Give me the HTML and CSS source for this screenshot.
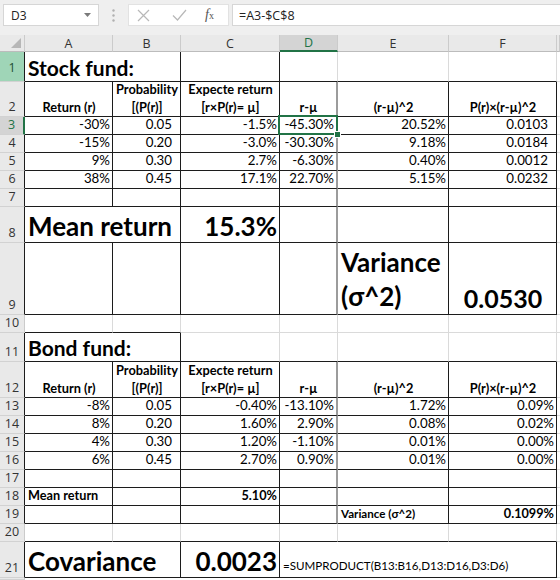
FILE: index.html
```html
<!DOCTYPE html>
<html lang="en">
<head>
  <meta charset="UTF-8">
  <meta name="viewport" content="width=device-width, initial-scale=1.0">
  <title>Stock and bond fund covariance</title>
  <link rel="stylesheet" href="styles.css">
</head>
<body>

  <!-- Barra de fórmulas -->
  <div class="topbar">
    <div class="namebox">
      <span>D3</span>
      <svg class="drop" width="7" height="4" viewBox="0 0 7 4"><path d="M0 0h7L3.5 4z" fill="#7a7a7a"/></svg>
    </div>
    <svg class="dots" width="3" height="13" viewBox="0 0 3 13">
      <circle cx="1.5" cy="1.5" r="1.2" fill="#b0b0b0"/>
      <circle cx="1.5" cy="6.5" r="1.2" fill="#b0b0b0"/>
      <circle cx="1.5" cy="11.5" r="1.2" fill="#b0b0b0"/>
    </svg>
    <div class="fnbox">
      <svg width="13" height="13" viewBox="0 0 13 13"><path d="M1 1l11 11M12 1L1 12" stroke="#b8b8b8" stroke-width="1.2" fill="none"/></svg>
      <svg width="15" height="12" viewBox="0 0 15 12"><path d="M1 6.5l4.5 4.5L14 1" stroke="#b8b8b8" stroke-width="1.2" fill="none"/></svg>
      <span class="fx"><i>f</i><small>x</small></span>
    </div>
    <div class="formula">=A3-$C$8</div>
  </div>

  <!-- Planilha -->
  <div class="sheet">
    <div class="ch corner"></div>
    <div class="ch">A</div>
    <div class="ch">B</div>
    <div class="ch">C</div>
    <div class="ch on">D</div>
    <div class="ch">E</div>
    <div class="ch">F</div>
    <div class="ch"></div>

    <!-- 1 -->
    <div class="rh green rk">1</div>
    <div class="c k span2 title">Stock fund:</div>
    <div class="c k"></div>
    <div class="c kb"></div>
    <div class="c kb"></div>
    <div class="c kb"></div>
    <div class="c"></div>

    <!-- 2 -->
    <div class="rh rk">2</div>
    <div class="c k hd">Return (r)</div>
    <div class="c k hd">Probability<br>[(P(r)]</div>
    <div class="c k hd">Expecte return<br>[r×P(r)= µ]</div>
    <div class="c d hd">r-µ</div>
    <div class="c k hd">(r-µ)^2</div>
    <div class="c k hd">P(r)×(r-µ)^2</div>
    <div class="c"></div>

    <!-- 3 -->
    <div class="rh on rk">3</div>
    <div class="c k n">-30%</div>
    <div class="c k n pb">0.05</div>
    <div class="c k n">-1.5%</div>
    <div class="c d n sel">-45.30%</div>
    <div class="c k n">20.52%</div>
    <div class="c k n pb">0.0103</div>
    <div class="c"></div>

    <!-- 4 -->
    <div class="rh rk">4</div>
    <div class="c k n">-15%</div>
    <div class="c k n pb">0.20</div>
    <div class="c k n">-3.0%</div>
    <div class="c d n">-30.30%</div>
    <div class="c k n">9.18%</div>
    <div class="c k n pb">0.0184</div>
    <div class="c"></div>

    <!-- 5 -->
    <div class="rh rk">5</div>
    <div class="c k n">9%</div>
    <div class="c k n pb">0.30</div>
    <div class="c k n">2.7%</div>
    <div class="c d n">-6.30%</div>
    <div class="c k n">0.40%</div>
    <div class="c k n pb">0.0012</div>
    <div class="c"></div>

    <!-- 6 -->
    <div class="rh rk">6</div>
    <div class="c k n">38%</div>
    <div class="c k n pb">0.45</div>
    <div class="c k n">17.1%</div>
    <div class="c d n">22.70%</div>
    <div class="c k n">5.15%</div>
    <div class="c k n pb">0.0232</div>
    <div class="c"></div>

    <!-- 7 -->
    <div class="rh rk">7</div>
    <div class="c k"></div>
    <div class="c k"></div>
    <div class="c k"></div>
    <div class="c d"></div>
    <div class="c k"></div>
    <div class="c k"></div>
    <div class="c"></div>

    <!-- 8 -->
    <div class="rh rk">8</div>
    <div class="c k span2 big">Mean return</div>
    <div class="c k n big">15.3%</div>
    <div class="c d"></div>
    <div class="c k"></div>
    <div class="c k"></div>
    <div class="c"></div>

    <!-- 9 -->
    <div class="rh rk">9</div>
    <div class="c k"></div>
    <div class="c k"></div>
    <div class="c k"></div>
    <div class="c d"></div>
    <div class="c k big wrap">Variance<br>(σ^2)</div>
    <div class="c k big mid">0.0530</div>
    <div class="c"></div>

    <!-- 10 -->
    <div class="rh">10</div>
    <div class="c kb"></div>
    <div class="c kb"></div>
    <div class="c"></div>
    <div class="c"></div>
    <div class="c"></div>
    <div class="c"></div>
    <div class="c"></div>

    <!-- 11 -->
    <div class="rh rk">11</div>
    <div class="c k span2 title">Bond fund:</div>
    <div class="c kb"></div>
    <div class="c kb"></div>
    <div class="c kb"></div>
    <div class="c kb"></div>
    <div class="c"></div>

    <!-- 12 -->
    <div class="rh rk">12</div>
    <div class="c k hd">Return (r)</div>
    <div class="c k hd">Probability<br>[(P(r)]</div>
    <div class="c k hd">Expecte return<br>[r×P(r)= µ]</div>
    <div class="c d hd">r-µ</div>
    <div class="c k hd">(r-µ)^2</div>
    <div class="c k hd">P(r)×(r-µ)^2</div>
    <div class="c"></div>

    <!-- 13 -->
    <div class="rh rk">13</div>
    <div class="c k n">-8%</div>
    <div class="c k n pb">0.05</div>
    <div class="c k n">-0.40%</div>
    <div class="c d n">-13.10%</div>
    <div class="c k n">1.72%</div>
    <div class="c k n">0.09%</div>
    <div class="c"></div>

    <!-- 14 -->
    <div class="rh rk">14</div>
    <div class="c k n">8%</div>
    <div class="c k n pb">0.20</div>
    <div class="c k n">1.60%</div>
    <div class="c d n">2.90%</div>
    <div class="c k n">0.08%</div>
    <div class="c k n">0.02%</div>
    <div class="c"></div>

    <!-- 15 -->
    <div class="rh rk">15</div>
    <div class="c k n">4%</div>
    <div class="c k n pb">0.30</div>
    <div class="c k n">1.20%</div>
    <div class="c d n">-1.10%</div>
    <div class="c k n">0.01%</div>
    <div class="c k n">0.00%</div>
    <div class="c"></div>

    <!-- 16 -->
    <div class="rh rk">16</div>
    <div class="c k n">6%</div>
    <div class="c k n pb">0.45</div>
    <div class="c k n">2.70%</div>
    <div class="c d n">0.90%</div>
    <div class="c k n">0.01%</div>
    <div class="c k n">0.00%</div>
    <div class="c"></div>

    <!-- 17 -->
    <div class="rh rk">17</div>
    <div class="c k"></div>
    <div class="c k"></div>
    <div class="c k"></div>
    <div class="c d"></div>
    <div class="c k"></div>
    <div class="c k"></div>
    <div class="c"></div>

    <!-- 18 -->
    <div class="rh rk">18</div>
    <div class="c k bold">Mean return</div>
    <div class="c k"></div>
    <div class="c k n bold">5.10%</div>
    <div class="c d"></div>
    <div class="c k"></div>
    <div class="c k"></div>
    <div class="c"></div>

    <!-- 19 -->
    <div class="rh rk">19</div>
    <div class="c k"></div>
    <div class="c k"></div>
    <div class="c k"></div>
    <div class="c d"></div>
    <div class="c k bold small">Variance (σ^2)</div>
    <div class="c k n bold">0.1099%</div>
    <div class="c"></div>

    <!-- 20 -->
    <div class="rh">20</div>
    <div class="c kb"></div>
    <div class="c kb"></div>
    <div class="c kb"></div>
    <div class="c kb"></div>
    <div class="c kb"></div>
    <div class="c kb"></div>
    <div class="c"></div>

    <!-- 21 -->
    <div class="rh rk">21</div>
    <div class="c k span2 big">Covariance</div>
    <div class="c k n big">0.0023</div>
    <div class="c k span3 note">=SUMPRODUCT(B13:B16,D13:D16,D3:D6)</div>
    <div class="c"></div>

    <div class="rh"></div>
  </div>

</body>
</html>
```

FILE: styles.css
```css
/* Página */
body {
  margin: 0;
  width: 560px;
  height: 580px;
  overflow: hidden;
  background: #ffffff;
  font-family: Lato, "Noto Sans", sans-serif;
  color: #000000;
}

/* Barra de fórmulas */
.topbar {
  height: 35px;
  box-sizing: border-box;
  padding: 4px 0 0 3px;
  background: #efefef;
  display: flex;
  align-items: flex-start;
  font-family: "Open Sans", "Noto Sans", sans-serif;
  font-size: 12px;
  color: #222;
}

.namebox {
  width: 96px;
  height: 22px;
  box-sizing: border-box;
  background: #ffffff;
  border: 1px solid #d6d6d6;
  display: flex;
  align-items: center;
  justify-content: space-between;
  padding: 0 7px 0 7px;
}

.dots {
  margin: 5px 13px 0 13px;
}

.fnbox {
  width: 101px;
  height: 22px;
  box-sizing: border-box;
  background: #ffffff;
  border: 1px solid #e2e2e2;
  display: flex;
  align-items: center;
  gap: 22px;
  padding-left: 8px;
}

.fx {
  font-family: "Liberation Serif", serif;
  font-size: 14px;
  color: #555;
  margin-left: -4px;
}

.fx small {
  font-size: 10px;
}

.formula {
  flex: 1;
  height: 22px;
  box-sizing: border-box;
  margin-left: 3px;
  background: #ffffff;
  border: 1px solid #d6d6d6;
  border-right: none;
  padding: 2px 6px;
  font-size: 12.5px;
}

/* Grade da planilha */
.sheet {
  display: grid;
  grid-template-columns: 25px 88px 68px 99px 58px 111px 108px 3px;
  grid-template-rows: 17px 30px 35px repeat(5, 18px) 36px 72px 18px 29px 36px repeat(8, 18px) 36px 2px;
}

.c {
  box-sizing: border-box;
  border-right: 1px solid #dadada;
  border-bottom: 1px solid #dadada;
  display: flex;
  align-items: flex-end;
  padding: 0 2px 1px 3px;
  white-space: nowrap;
  font-size: 13.3px;
  line-height: 17px;
}

.k {
  border-right-color: #1c1c1c;
  border-bottom-color: #1c1c1c;
}

.kb {
  border-bottom-color: #1c1c1c;
}

.d {
  border-right: 2px solid #9c9c9c;
  border-bottom-color: #1c1c1c;
}

.span2 {
  grid-column: span 2;
}

.span3 {
  grid-column: span 3;
}

.n {
  justify-content: flex-end;
}

.pb {
  padding-right: 8px;
}

.hd {
  justify-content: center;
  text-align: center;
  font-weight: bold;
  font-size: 12.8px;
  line-height: 18px;
  padding-bottom: 0;
}

.bold {
  font-weight: bold;
  font-size: 12.7px;
}

.bold.small {
  font-size: 11.6px;
}

.title {
  font-weight: bold;
  font-size: 21px;
  line-height: 25px;
}

.big {
  font-weight: bold;
  font-size: 26px;
  line-height: 30px;
}

.big.mid {
  font-size: 25px;
  justify-content: center;
}

.wrap {
  line-height: 34px;
  white-space: normal;
}

.note {
  font-size: 11.6px;
  padding-bottom: 3px;
}

/* Célula ativa */
.sel {
  position: relative;
}

.sel::before {
  content: "";
  position: absolute;
  top: -2px;
  left: -2px;
  right: -2px;
  bottom: -1px;
  border: 2px solid #217346;
}

.sel::after {
  content: "";
  position: absolute;
  right: -5px;
  bottom: -4px;
  width: 5px;
  height: 5px;
  background: #217346;
  border: 1px solid #ffffff;
}

/* Cabeçalhos */
.ch {
  box-sizing: border-box;
  background: #e9e9e9;
  border-right: 1px solid #cbcbcb;
  border-bottom: 1px solid #bcbcbc;
  display: flex;
  align-items: center;
  justify-content: center;
  font-family: "Open Sans", "Noto Sans", sans-serif;
  font-size: 12.5px;
  color: #333;
}

.ch.on {
  background: #d4d4d4;
  color: #217346;
  border-bottom: 2px solid #217346;
}

.corner {
  position: relative;
}

.corner::after {
  content: "";
  position: absolute;
  right: 3px;
  bottom: 3px;
  border-style: solid;
  border-width: 0 0 10px 10px;
  border-color: transparent transparent #b7b7b7 transparent;
}

.rh {
  box-sizing: border-box;
  background: #e9e9e9;
  border-right: 1px solid #cbcbcb;
  border-bottom: 1px solid #d2d2d2;
  display: flex;
  align-items: flex-end;
  justify-content: center;
  padding-bottom: 1px;
  font-family: "Open Sans", "Noto Sans", sans-serif;
  font-size: 12.5px;
  line-height: 16px;
  color: #333;
}

.rh.rk {
  border-right-color: #1c1c1c;
}

.rh.green {
  background: #9fd5b7;
  color: #1d4d33;
  padding-bottom: 5px;
}

.rh.on {
  background: #d4d4d4;
  color: #217346;
  border-right: 2px solid #217346;
}
```
